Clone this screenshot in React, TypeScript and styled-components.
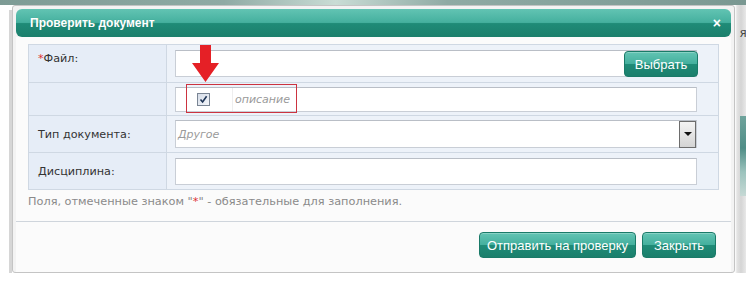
import styled, { createGlobalStyle } from 'styled-components'

const GlobalStyle = createGlobalStyle`
  html, body {
    margin: 0;
    padding: 0;
    background: #ffffff;
  }
  body {
    font-family: "DejaVu Sans", Verdana, sans-serif;
  }
`

const TEAL_GRADIENT = 'linear-gradient(to bottom, #62c4b3 0%, #45b09e 48%, #1f8b77 52%, #1b7f6c 100%)'

const Page = styled.div`
  width: 746px;
  height: 282px;
  overflow: hidden;
  display: flex;
  flex-direction: column;
  background: #ffffff;
`

const TopBand = styled.div`
  height: 5px;
  flex: none;
  background: linear-gradient(to right, #7d9b95 0%, #8faaa4 30%, #c9dcd5 45%, #8faaa4 60%, #7a9892 100%);
`

const Stage = styled.div`
  display: flex;
  height: 268px;
`

const LeftGutter = styled.div`
  width: 12px;
  flex: none;
  display: flex;
  justify-content: flex-end;

  &::after {
    content: '';
    width: 3px;
    margin-top: 5px;
    background: #d6d6d6;
  }
`

const RightGutter = styled.div`
  flex: 1;
  background: linear-gradient(to right, #ffffff 0px, #e3e3e3 2px, #d5d5d5 6px, #ececec 100%);
  font-family: "Liberation Sans", Arial, sans-serif;
  font-size: 12px;
  color: #444;
  padding-top: 21px;
  padding-left: 5px;

  .pic {
    margin-top: 76px;
    height: 80px;
    background: linear-gradient(to bottom, #6fa39c, #4f8d86 40%, #9cc3bd 70%, #c6d9d5);
  }
`

const Dialog = styled.div`
  width: 715px;
  flex: none;
  border: 1px solid #c4c4c4;
  border-radius: 3px;
  background: #f3f3f3;
  padding: 3px 3px 0;
  display: flex;
  flex-direction: column;
`

const TitleBar = styled.div`
  height: 28px;
  border-radius: 6px;
  background: ${TEAL_GRADIENT};
  display: flex;
  align-items: center;
  justify-content: space-between;
  padding: 0 10px 0 14px;
  color: #ffffff;
  font-family: "Liberation Sans", Arial, sans-serif;

  .title {
    font-size: 12px;
    font-weight: 700;
    text-shadow: 0 0 1px rgba(0, 0, 0, 0.15);
  }

  .close {
    font-size: 14px;
    font-weight: 700;
    line-height: 1;
    cursor: pointer;
  }
`

const Body = styled.div`
  flex: 1;
  background: #fbfbfb;
  display: flex;
  flex-direction: column;
`

const FormArea = styled.div`
  position: relative;
  padding: 7px 12px 0;
`

const FormTable = styled.table`
  width: 691px;
  border-collapse: collapse;
  font-size: 11.2px;
  color: #333333;

  td {
    border: 1px solid #cfd8e3;
    padding: 0;
  }
`

const LabelCell = styled.td<{ $top?: boolean }>`
  width: 128px;
  background: #e6edf7;
  padding-left: 9px !important;
  vertical-align: ${(p) => (p.$top ? 'top' : 'middle')};
  padding-top: ${(p) => (p.$top ? '7px' : '0')} !important;
  white-space: nowrap;

  .req {
    color: #e03030;
  }
`

const ValueCell = styled.td<{ $h: number }>`
  height: ${(p) => p.$h}px;
  background: #edf2f9;
  padding-left: 8px !important;
  vertical-align: middle;
`

const TextBox = styled.div<{ $h: number }>`
  width: 520px;
  height: ${(p) => p.$h}px;
  background: #ffffff;
  border: 1px solid #c9ced6;
  border-top-color: #b9bec6;
  display: flex;
  align-items: center;
  justify-content: flex-end;
  box-sizing: content-box;
`

const Placeholder = styled.span`
  font-style: italic;
  color: #9a9a9a;
  font-size: 11px;
  padding-left: 2px;
  flex: 1;
`

const CheckCell = styled.div`
  width: 57px;
  align-self: stretch;
  display: flex;
  align-items: center;
  border-right: 1px solid #eeeeee;
  padding-left: 21px;
  box-sizing: border-box;
`

const CheckBox = styled.span`
  width: 11px;
  height: 11px;
  border: 1px solid #7a8594;
  background: linear-gradient(to bottom right, #d6dde8, #f3f5f9);
  display: inline-flex;
  align-items: center;
  justify-content: center;
`

const SelectArrow = styled.span`
  width: 15px;
  height: 25px;
  border: 1px solid #6d6d6d;
  background: linear-gradient(to bottom, #f4f4f4, #d4d4d4);
  display: flex;
  align-items: center;
  justify-content: center;

  &::after {
    content: '';
    border-left: 4px solid transparent;
    border-right: 4px solid transparent;
    border-top: 4px solid #111;
  }
`

const TealButton = styled.button<{ $w: number }>`
  width: ${(p) => p.$w}px;
  height: 26px;
  border: 1px solid #1a7a68;
  border-radius: 4px;
  background: ${TEAL_GRADIENT};
  color: #ffffff;
  font-family: "Liberation Sans", Arial, sans-serif;
  font-size: 13px;
  padding: 0;
  cursor: pointer;
  box-shadow: inset 0 1px 0 rgba(255, 255, 255, 0.25);
`

const FileButton = styled(TealButton)`
  margin-right: -2px;
  margin-top: 1px;
`

const Note = styled.div`
  padding: 5px 12px 0;
  font-size: 11.3px;
  color: #8a8a8a;
  height: 26px;

  .req {
    color: #e03030;
  }
`

const Footer = styled.div`
  border-top: 1px solid #cfd5dc;
  display: flex;
  justify-content: flex-end;
  gap: 6px;
  padding: 10px 15px 0;
  flex: 1;
`

const RedBox = styled.div`
  position: absolute;
  left: 170px;
  top: 47px;
  width: 109px;
  height: 27px;
  border: 1px solid #cc3340;
  pointer-events: none;
`

const RedArrow = styled.svg`
  position: absolute;
  left: 176px;
  top: 8px;
  pointer-events: none;
`

const CheckMark = () => (
  <svg width="9" height="9" viewBox="0 0 9 9">
    <path d="M1.5 4.5 L3.6 7 L7.6 1.2" fill="none" stroke="#1f3556" strokeWidth="1.6" />
  </svg>
)

export default function App() {
  return (
    <>
      <GlobalStyle />
      <Page>
        <TopBand />
        <Stage>
          <LeftGutter />
          <Dialog>
            <TitleBar>
              <span className="title">Проверить документ</span>
              <span className="close">×</span>
            </TitleBar>
            <Body>
              <FormArea>
                <FormTable>
                  <tbody>
                    <tr>
                      <LabelCell $top>
                        <span className="req">*</span>Файл:
                      </LabelCell>
                      <ValueCell $h={37}>
                        <TextBox $h={25}>
                          <FileButton $w={74}>Выбрать</FileButton>
                        </TextBox>
                      </ValueCell>
                    </tr>
                    <tr>
                      <LabelCell />
                      <ValueCell $h={32}>
                        <TextBox $h={23}>
                          <CheckCell>
                            <CheckBox>
                              <CheckMark />
                            </CheckBox>
                          </CheckCell>
                          <Placeholder>описание</Placeholder>
                        </TextBox>
                      </ValueCell>
                    </tr>
                    <tr>
                      <LabelCell>Тип документа:</LabelCell>
                      <ValueCell $h={36}>
                        <TextBox $h={26}>
                          <Placeholder>Другое</Placeholder>
                          <SelectArrow />
                        </TextBox>
                      </ValueCell>
                    </tr>
                    <tr>
                      <LabelCell>Дисциплина:</LabelCell>
                      <ValueCell $h={36}>
                        <TextBox $h={25} />
                      </ValueCell>
                    </tr>
                  </tbody>
                </FormTable>
                <RedArrow width="28" height="37" viewBox="0 0 28 37">
                  <path d="M8 0 H19 V18 H27 L13.5 37 L0 18 H8 Z" fill="#e52026" />
                </RedArrow>
                <RedBox />
              </FormArea>
              <Note>
                Поля, отмеченные знаком "<span className="req">*</span>" - обязательные для заполнения.
              </Note>
              <Footer>
                <TealButton $w={157}>Отправить на проверку</TealButton>
                <TealButton $w={74}>Закрыть</TealButton>
              </Footer>
            </Body>
          </Dialog>
          <RightGutter>
            я
            <div className="pic" />
          </RightGutter>
        </Stage>
      </Page>
    </>
  )
}
